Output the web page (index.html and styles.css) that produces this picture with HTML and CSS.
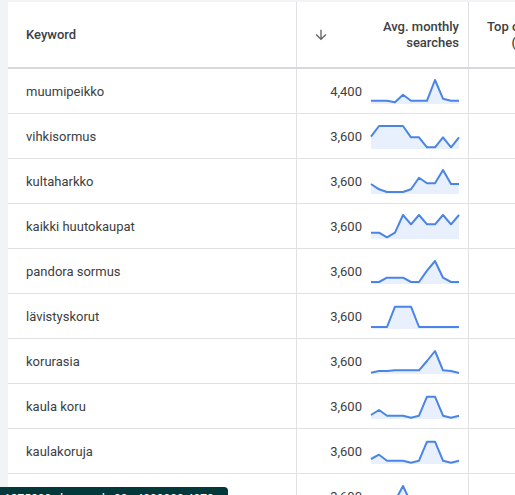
FILE: index.html
```html
<!DOCTYPE html>
<html>
<head>
<meta charset="utf-8">
<link rel="stylesheet" href="styles.css">
</head>
<body>
<div class="page">
  <div class="table">
    <div class="row head">
      <div class="cell kw">Keyword</div>
      <div class="cell num">
        <svg class="sort" viewBox="0 0 24 24" width="16" height="16"><path d="M20 12l-1.41-1.41L13 16.17V4h-2v12.17l-5.58-5.59L4 12l8 8 8-8z" fill="#5f6368"/></svg>
        <span class="htext">Avg. monthly<br>searches</span>
      </div>
      <div class="cell top">Top of page bid<br>(low range)</div>
    </div>

    <div class="row">
      <div class="cell kw">muumipeikko</div>
      <div class="cell num"><span>4,400</span>
        <svg class="spark" width="88" height="26" viewBox="0 0 88 26"><polygon class="area" points="0,22.7 8,22.7 16,22.7 24,24.3 32,16.7 40,22.7 48,22.7 56,22.7 64,2 72,20.7 80,22.7 88,22.7 88,26 0,26"/><polyline class="line" points="0,22.7 8,22.7 16,22.7 24,24.3 32,16.7 40,22.7 48,22.7 56,22.7 64,2 72,20.7 80,22.7 88,22.7"/></svg>
      </div>
      <div class="cell top"></div>
    </div>

    <div class="row">
      <div class="cell kw">vihkisormus</div>
      <div class="cell num"><span>3,600</span>
        <svg class="spark" width="88" height="26" viewBox="0 0 88 26"><polygon class="area" points="0,13.7 8,3 16,3 24,3 32,3 40,14.3 48,14.3 56,24.3 64,24.3 72,14.3 80,24.3 88,14.3 88,26 0,26"/><polyline class="line" points="0,13.7 8,3 16,3 24,3 32,3 40,14.3 48,14.3 56,24.3 64,24.3 72,14.3 80,24.3 88,14.3"/></svg>
      </div>
      <div class="cell top"></div>
    </div>

    <div class="row">
      <div class="cell kw">kultaharkko</div>
      <div class="cell num"><span>3,600</span>
        <svg class="spark" width="88" height="26" viewBox="0 0 88 26"><polygon class="area" points="0,16 8,21.3 16,24 24,24 32,24 40,21.3 48,9.7 56,15.3 64,15.3 72,2 80,16 88,16 88,26 0,26"/><polyline class="line" points="0,16 8,21.3 16,24 24,24 32,24 40,21.3 48,9.7 56,15.3 64,15.3 72,2 80,16 88,16"/></svg>
      </div>
      <div class="cell top"></div>
    </div>

    <div class="row">
      <div class="cell kw">kaikki huutokaupat</div>
      <div class="cell num"><span>3,600</span>
        <svg class="spark" width="88" height="26" viewBox="0 0 88 26"><polygon class="area" points="0,19.7 8,19.7 16,24.3 24,19.7 32,2 40,11.3 48,2 56,11.3 64,11.3 72,2 80,11.3 88,2 88,26 0,26"/><polyline class="line" points="0,19.7 8,19.7 16,24.3 24,19.7 32,2 40,11.3 48,2 56,11.3 64,11.3 72,2 80,11.3 88,2"/></svg>
      </div>
      <div class="cell top"></div>
    </div>

    <div class="row">
      <div class="cell kw">pandora sormus</div>
      <div class="cell num"><span>3,600</span>
        <svg class="spark" width="88" height="26" viewBox="0 0 88 26"><polygon class="area" points="0,24 8,24 16,19.7 24,19.7 32,19.7 40,24 48,24 56,12.7 64,3 72,19.7 80,24 88,24 88,26 0,26"/><polyline class="line" points="0,24 8,24 16,19.7 24,19.7 32,19.7 40,24 48,24 56,12.7 64,3 72,19.7 80,24 88,24"/></svg>
      </div>
      <div class="cell top"></div>
    </div>

    <div class="row">
      <div class="cell kw">lävistyskorut</div>
      <div class="cell num"><span>3,600</span>
        <svg class="spark" width="88" height="26" viewBox="0 0 88 26"><polygon class="area" points="0,24 8,24 16,24 24,3.7 32,3.7 40,3.7 48,24 56,24 64,24 72,24 80,24 88,24 88,26 0,26"/><polyline class="line" points="0,24 8,24 16,24 24,3.7 32,3.7 40,3.7 48,24 56,24 64,24 72,24 80,24 88,24"/></svg>
      </div>
      <div class="cell top"></div>
    </div>

    <div class="row">
      <div class="cell kw">korurasia</div>
      <div class="cell num"><span>3,600</span>
        <svg class="spark" width="88" height="26" viewBox="0 0 88 26"><polygon class="area" points="0,24.7 8,23 16,23 24,22.3 32,22.3 40,22.3 48,22.3 56,13 64,3 72,22.3 80,23 88,25 88,26 0,26"/><polyline class="line" points="0,24.7 8,23 16,23 24,22.3 32,22.3 40,22.3 48,22.3 56,13 64,3 72,22.3 80,23 88,25"/></svg>
      </div>
      <div class="cell top"></div>
    </div>

    <div class="row">
      <div class="cell kw">kaula koru</div>
      <div class="cell num"><span>3,600</span>
        <svg class="spark" width="88" height="26" viewBox="0 0 88 26"><polygon class="area" points="0,22 8,17 16,22.7 24,22.7 32,22.7 40,24.7 48,22.7 56,3.7 64,3.7 72,22.7 80,24.7 88,22.7 88,26 0,26"/><polyline class="line" points="0,22 8,17 16,22.7 24,22.7 32,22.7 40,24.7 48,22.7 56,3.7 64,3.7 72,22.7 80,24.7 88,22.7"/></svg>
      </div>
      <div class="cell top"></div>
    </div>

    <div class="row">
      <div class="cell kw">kaulakoruja</div>
      <div class="cell num"><span>3,600</span>
        <svg class="spark" width="88" height="26" viewBox="0 0 88 26"><polygon class="area" points="0,21 8,16.7 16,22.7 24,22.7 32,22.7 40,24.7 48,22.7 56,3.7 64,3.7 72,22.7 80,24.7 88,22.7 88,26 0,26"/><polyline class="line" points="0,21 8,16.7 16,22.7 24,22.7 32,22.7 40,24.7 48,22.7 56,3.7 64,3.7 72,22.7 80,24.7 88,22.7"/></svg>
      </div>
      <div class="cell top"></div>
    </div>

    <div class="row">
      <div class="cell kw"></div>
      <div class="cell num"><span>3,600</span>
        <svg class="spark" width="88" height="26" viewBox="0 0 88 26"><polygon class="area" points="0,20 8,20 16,22 24,18 32,3 40,20 48,22 56,22 64,20 72,22 80,24 88,22 88,26 0,26"/><polyline class="line" points="0,20 8,20 16,22 24,18 32,3 40,20 48,22 56,22 64,20 72,22 80,24 88,22"/></svg>
      </div>
      <div class="cell top"></div>
    </div>
  </div>

  <div class="tooltip">1375200 · keyword · 00 · 4000000 4070</div>
</div>
</body>
</html>
```

FILE: styles.css
```css
* { box-sizing: border-box; }

html, body {
  margin: 0;
  padding: 0;
  background: #f1f3f4;
  overflow: hidden;
}

.page {
  width: 515px;
  height: 495px;
  padding: 2px 0 0 8px;
  position: relative;
  overflow: hidden;
  font-family: Roboto, "Liberation Sans", sans-serif;
  font-size: 13px;
  color: #3c4043;
}

.table {
  background: #fff;
  width: 507px;
  height: 493px;
  overflow: hidden;
}

.row {
  display: grid;
  grid-template-columns: 289px 172px 200px;
  height: 45px;
  border-bottom: 1px solid #dfe1e5;
}

.row.head {
  height: 67px;
  border-bottom: 2px solid #d6d8db;
  font-weight: 500;
  color: #3c4043;
}

.cell {
  display: flex;
  align-items: center;
  border-right: 1px solid #dfe1e5;
  white-space: nowrap;
}

.cell.kw {
  padding-left: 18px;
}

.cell.num {
  justify-content: flex-end;
  padding-right: 9px;
  gap: 9px;
}

.head .cell.num {
  justify-content: space-between;
  padding-left: 16px;
}

.sort {
  display: block;
}

.htext {
  text-align: right;
  line-height: 16px;
}

.cell.top {
  border-right: none;
  padding-left: 18px;
  line-height: 16px;
  text-align: right;
  justify-content: flex-start;
}

.spark {
  display: block;
  overflow: visible;
}

.spark .area {
  fill: #e8f0fe;
}

.spark .line {
  fill: none;
  stroke: #4a84e6;
  stroke-width: 2;
  stroke-linejoin: round;
}

.tooltip {
  position: absolute;
  left: 0;
  top: 487px;
  width: 228px;
  height: 30px;
  background: #03393b;
  border-radius: 0 4px 0 0;
  color: #fff;
  font-size: 12px;
  padding: 5px 0 0 4px;
  white-space: nowrap;
  overflow: hidden;
}
```
